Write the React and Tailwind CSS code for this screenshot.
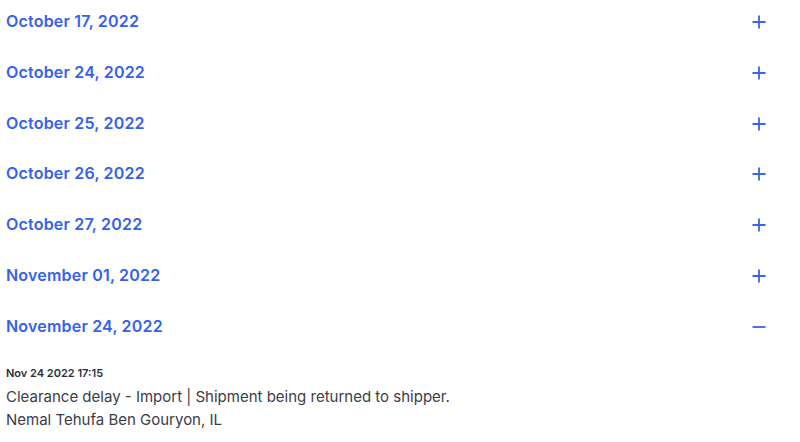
import React from "react";

const dates = [
  "October 17, 2022",
  "October 24, 2022",
  "October 25, 2022",
  "October 26, 2022",
  "October 27, 2022",
  "November 01, 2022",
];

function Plus() {
  return (
    <svg width="14" height="14" viewBox="0 0 14 14" className="text-[#3a63ee] mt-[6px]">
      <path d="M7 0.5v13M0.5 7h13" stroke="currentColor" strokeWidth="1.8" />
    </svg>
  );
}

function Minus() {
  return (
    <svg width="14" height="14" viewBox="0 0 14 14" className="text-[#3a63ee] mt-[6px]">
      <path d="M0.5 7h13" stroke="currentColor" strokeWidth="1.8" />
    </svg>
  );
}

function Row({ label, open }) {
  return (
    <div className="h-[50.8px] flex items-start justify-between pt-[9px]">
      <span className="text-[16px] leading-[24px] font-semibold tracking-[0.2px] text-[#3461ee]">
        {label}
      </span>
      {open ? <Minus /> : <Plus />}
    </div>
  );
}

export default function App() {
  return (
    <div
      className="w-[800px] h-[442px] bg-white pl-[6px] pr-[34px] overflow-hidden"
      style={{ fontFamily: "Inter, 'Noto Sans', sans-serif" }}
    >
      {dates.map((d) => (
        <Row key={d} label={d} />
      ))}
      <Row label="November 24, 2022" open />
      <div className="pt-[9px] text-[#2b2f3a]">
        <div className="text-[11px] font-semibold leading-[16px]">Nov 24 2022 17:15</div>
        <div className="text-[15px] leading-[23px] mt-[4px] text-[#3a3d48]">
          Clearance delay - Import | Shipment being returned to shipper.
        </div>
        <div className="text-[15px] leading-[23px] text-[#3a3d48]">Nemal Tehufa Ben Gouryon, IL</div>
      </div>
    </div>
  );
}
